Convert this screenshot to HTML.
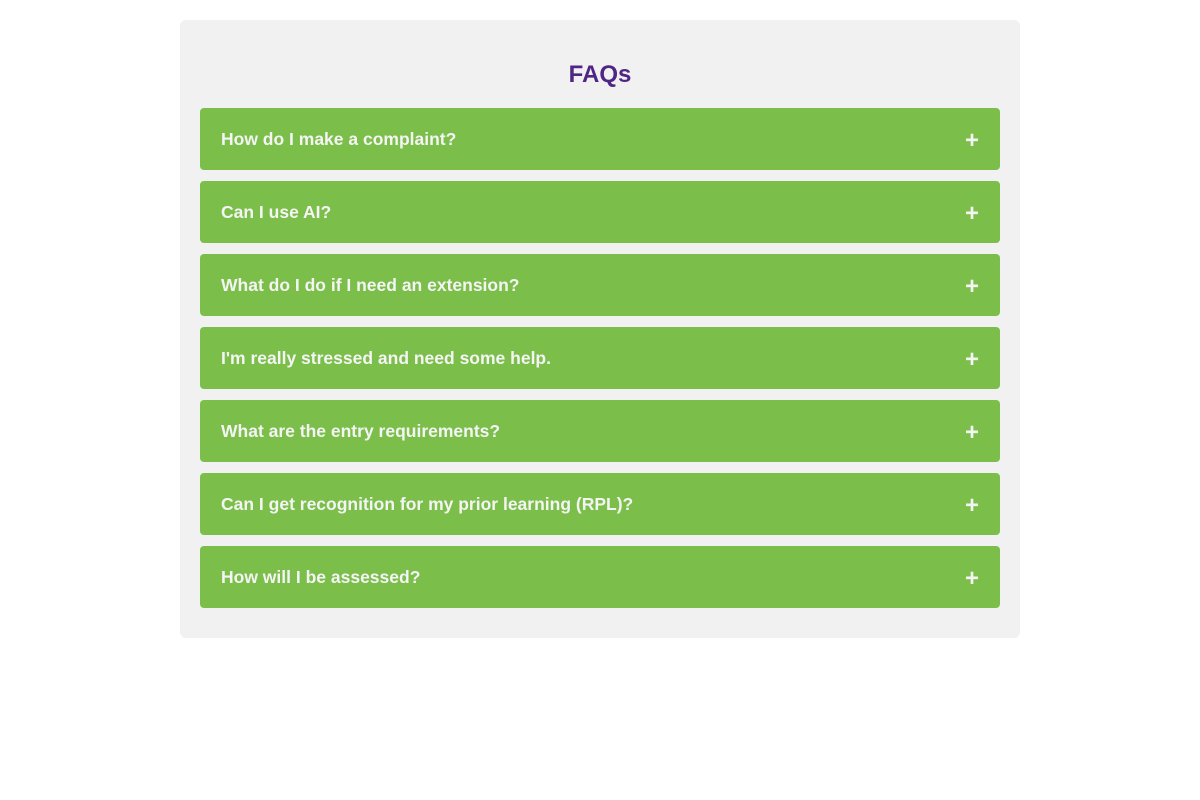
<!DOCTYPE html>
<html><head><style>
body{margin:0;background:#fff;font-family:"Liberation Sans",Arial,sans-serif;}
.c{position:absolute;left:180px;top:20px;width:840px;height:618px;background:#f1f1f1;border-radius:6px;}
h2{margin:0;position:absolute;top:41px;left:0;width:100%;text-align:center;font-size:24px;font-weight:bold;color:#4f2683;line-height:28px;}
.i{position:absolute;left:20px;width:800px;height:62px;background:#7bbf4a;border-radius:4px;color:#f4f4f4;font-weight:bold;font-size:17.5px;line-height:62px;}
.i span.t{position:absolute;left:21px;top:0;}
.i span.p{position:absolute;right:21px;top:2px;font-size:24px;}
</style></head><body>
<div class="c">
<h2>FAQs</h2>
<div class="i" style="top:88px"><span class="t">How do I make a complaint?</span><span class="p">+</span></div>
<div class="i" style="top:161px"><span class="t">Can I use AI?</span><span class="p">+</span></div>
<div class="i" style="top:234px"><span class="t">What do I do if I need an extension?</span><span class="p">+</span></div>
<div class="i" style="top:307px"><span class="t">I'm really stressed and need some help.</span><span class="p">+</span></div>
<div class="i" style="top:380px"><span class="t">What are the entry requirements?</span><span class="p">+</span></div>
<div class="i" style="top:453px"><span class="t">Can I get recognition for my prior learning (RPL)?</span><span class="p">+</span></div>
<div class="i" style="top:526px"><span class="t">How will I be assessed?</span><span class="p">+</span></div>
</div>
</body></html>
